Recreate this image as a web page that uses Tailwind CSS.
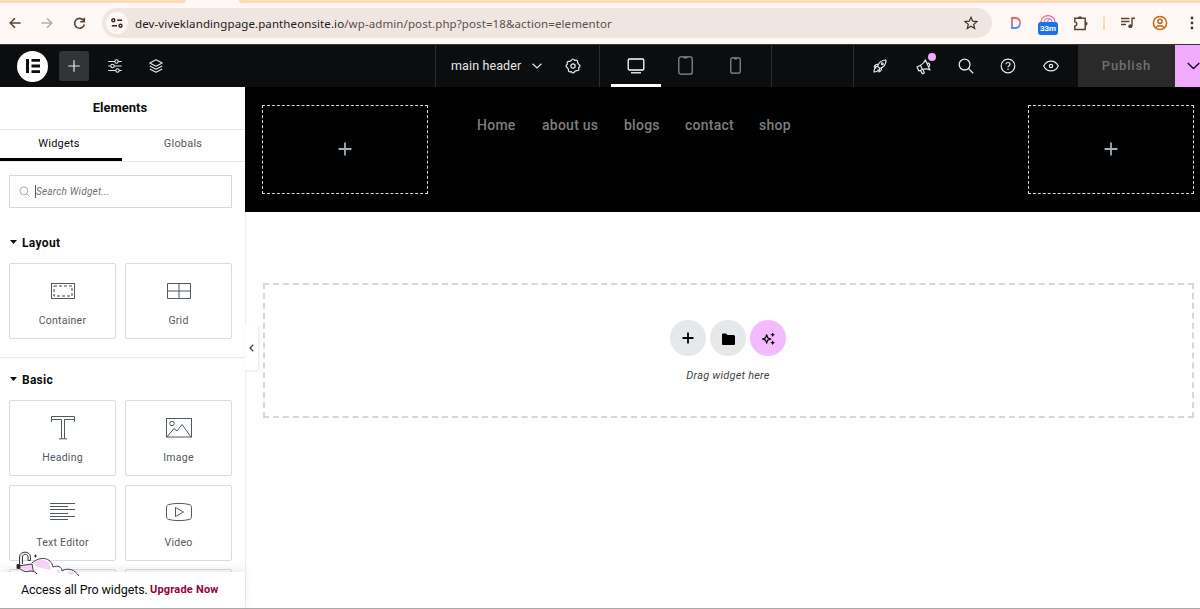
<!DOCTYPE html>
<html lang="en">
<head>
  <meta charset="UTF-8" />
  <meta name="viewport" content="width=device-width, initial-scale=1.0" />
  <title>Elementor | main header</title>
  <script src="https://cdn.jsdelivr.net/npm/@tailwindcss/browser@4"></script>
</head>
<body class="w-[1200px] h-[609px] overflow-hidden bg-white font-['Roboto',sans-serif] text-[#515962] flex flex-col">

  <!-- ---------- Browser toolbar ---------- -->
  <div class="h-[44px] shrink-0 bg-[#fff8f4] flex flex-col">
    <div class="h-[3px] flex justify-between">
      <div class="w-[186px] bg-[#ffdcb8] rounded-br-[4px]"></div>
      <div class="w-[961px] bg-[#ffdcb8] rounded-bl-[4px]"></div>
    </div>
    <div class="h-[40px] flex items-center text-[#5a4234]">
      <svg class="ml-[9px] size-3" viewBox="0 0 12 12" fill="none" stroke="currentColor" stroke-width="1.5"><path d="M11.5 6H1.5M6 1.2 1.2 6 6 10.8"/></svg>
      <svg class="ml-[20px] size-3 text-[#b9aca5]" viewBox="0 0 12 12" fill="none" stroke="currentColor" stroke-width="1.5"><path d="M.5 6h10M6 1.2 10.800 6 6 10.800"/></svg>
      <svg class="ml-[20px] size-[13px]" viewBox="0 0 13 13" fill="none" stroke="currentColor" stroke-width="1.6"><path d="M10.600 3.500A4.900 4.900 0 1 0 11.300 7.500M11.300 .8V4.800H7.300"/></svg>
      <div class="ml-[16px] w-[890px] h-[30px] rounded-full bg-[#efe6e2] flex items-center">
        <div class="ml-[4px] size-[22px] rounded-full bg-[#fff8f4] flex items-center justify-center">
          <svg class="w-3 h-[10px] text-[#33261f]" viewBox="0 0 12 10" fill="none" stroke="currentColor" stroke-width="1.4"><circle cx="2.300" cy="2.200" r="1.500"/><path d="M6.200 2.200H11M.8 7.800H6"/><circle cx="9.500" cy="7.800" r="1.500"/></svg>
        </div>
        <p class="ml-[7px] mt-[1px] font-['Noto_Sans',sans-serif] text-[11.5px] tracking-[0.1px] whitespace-nowrap text-[#5c504b]"><span class="text-[#221c19]">dev-viveklandingpage.pantheonsite.io</span>/wp-admin/post.php?post=18&amp;action=elementor</p>
        <svg class="ml-auto mr-[14px] size-[14px]" viewBox="0 0 14 14" fill="none" stroke="#3f3029" stroke-width="1.200"><path d="M7 1.300 8.700 5.200 12.900 5.600 9.700 8.400 10.700 12.500 7 10.300 3.300 12.500 4.300 8.400 1.100 5.600 5.300 5.200Z"/></svg>
      </div>
      <svg class="ml-[18px] w-[12px] h-[14px]" viewBox="0 0 12 14" fill="none"><defs><linearGradient id="dg" x1="0" y1="0" x2="0" y2="1"><stop offset="0" stop-color="#f3655a"/><stop offset=".5" stop-color="#c98bb0"/><stop offset="1" stop-color="#4b93ff"/></linearGradient></defs><path d="M2 2V12H5C8.500 12 10 10.200 10 7S8.500 2 5 2Z" stroke="url(#dg)" stroke-width="2"/></svg>
      <div class="ml-[16px] w-5 h-5 flex flex-col items-center mt-[4px]">
        <svg class="w-4 h-[7px] shrink-0" viewBox="0 0 16 7" fill="none" stroke-width="1.200"><path d="M1 7A7 6.300 0 0 1 15 7" stroke="#d765c8"/><path d="M1.200 6A7 6 0 0 1 7 .8" stroke="#f29b62"/><path d="M4 7A4 3.600 0 0 1 12 7M7 7 10 3.500" stroke="#d98bd0"/></svg>
        <span class="w-[20px] h-[13px] rounded-[3px] bg-[#1a73e8] text-white text-[8px] leading-[13px] font-bold text-center">33m</span>
      </div>
      <svg class="ml-[15px] w-[16px] h-[15px]" viewBox="0 0 16 15" fill="none" stroke="currentColor" stroke-width="1.500"><path d="M1.800 2.300H5.200M8.800 2.300H12.200V13.500H1.800V10C4.400 9.500 4.400 6.300 1.800 5.800V2.300H12.200"/><path d="M5 2.300a2 2 0 0 1 4 0ZM12.500 5.800a2 2 0 0 1 0 4Z" fill="currentColor" stroke="none"/></svg>
      <div class="ml-[14px] w-[2px] h-[14px] bg-[#ffdcb8]"></div>
      <svg class="ml-[16px] w-[14px] h-[12px]" viewBox="0 0 14 12" fill="none" stroke="currentColor" stroke-width="1.400"><path d="M0 1.500H8.500M0 4.500H8.500M0 7.500H5M11 9V1.300H14"/><circle cx="9.300" cy="9.200" r="2" fill="currentColor" stroke="none"/></svg>
      <svg class="ml-[17px] size-[16px] text-[#c06a1a]" viewBox="0 0 16 16" fill="none" stroke="currentColor" stroke-width="1.500"><circle cx="8" cy="8" r="6.600"/><circle cx="8" cy="6.300" r="2.100"/><path d="M3.700 12.600C5.500 10.200 10.500 10.200 12.300 12.600"/></svg>
      <svg class="ml-[22px] w-[4px] h-[14px] shrink-0" viewBox="0 0 4 14" fill="#4a372c"><circle cx="2" cy="2" r="1.400"/><circle cx="2" cy="7" r="1.400"/><circle cx="2" cy="12" r="1.400"/></svg>
    </div>
  </div>

  <!-- ---------- Editor top bar ---------- -->
  <header class="h-[43px] shrink-0 bg-[#0c0d0e] border-t border-[#3a3432] text-[#e6e8ea] flex">
    <div class="w-[435px] flex items-center">
      <div class="ml-[17px] size-[31px] rounded-full bg-white flex items-center justify-center">
        <svg class="w-[14px] h-[14px]" viewBox="0 0 14 14" fill="#0c0d0e"><path d="M0 0h3v14H0zM5.500 0H14v2.800H5.500zM5.500 5.600H14v2.800H5.500zM5.500 11.200H14V14H5.500z"/></svg>
      </div>
      <div class="ml-[11px] size-[30px] rounded-[3px] bg-[#333435] flex items-center justify-center">
        <svg class="size-[12px]" viewBox="0 0 12 12" stroke="currentColor" stroke-width="1.200"><path d="M6 .3V11.700M.3 6H11.700"/></svg>
      </div>
      <svg class="ml-[19px] w-[14px] h-[14px]" viewBox="0 0 14 14" fill="none" stroke="currentColor" stroke-width="1.100"><path d="M.3 2.500H6.700M10.300 2.500H13.700M.3 7H2.700M6.300 7H13.700M.3 11.500H7.700M11.300 11.500H13.700"/><circle cx="8.500" cy="2.500" r="1.700"/><circle cx="4.500" cy="7" r="1.700"/><circle cx="9.500" cy="11.500" r="1.700"/></svg>
      <svg class="ml-[27px] w-[14px] h-[14px]" viewBox="0 0 14 14" fill="none" stroke="currentColor" stroke-width="1.100" stroke-linejoin="round"><path d="M7 .8 13.200 4 7 7.200 .8 4ZM.8 7 7 10.200 13.200 7M.8 10 7 13.200 13.200 10"/></svg>
    </div>
    <div class="w-[165px] border-x border-[#2b2c2d] flex items-center">
      <span class="ml-[15px] w-[71px] text-[12.5px] tracking-[0.12px] whitespace-nowrap">main header</span>
      <svg class="ml-[10px] w-[10px] h-[6px]" viewBox="0 0 10 6" fill="none" stroke="currentColor" stroke-width="1.200"><path d="M.6 .8 5 5 9.400 .8"/></svg>
      <svg class="ml-[23px] size-[16px]" viewBox="0 0 16 16" fill="none" stroke="currentColor" stroke-width="1.200" stroke-linejoin="round"><path d="M6.300 2.400Q8 -.4 9.700 2.400 Q13 1.300 12.600 4.600L13.600 6.300Q16.400 8 13.600 9.700 14.700 13 11.400 12.600L9.700 13.600Q8 16.400 6.300 13.600 3 14.700 3.400 11.400L2.400 9.700Q-.4 8 2.400 6.300 1.300 3 4.600 3.400Z"/><circle cx="8" cy="8" r="2.200"/></svg>
    </div>
    <div class="w-[172px] border-r border-[#2b2c2d] flex">
      <div class="ml-[11px] w-[50px] border-b-[3px] border-white flex items-center justify-center text-white">
        <svg class="w-[18px] h-[16px] mt-[3px]" viewBox="0 0 18 16" fill="none" stroke="currentColor" stroke-width="1.300"><rect x="1.200" y="1" width="15.600" height="11" rx="1.200"/><path d="M4 14.800H14"/></svg>
      </div>
      <div class="w-[50px] pr-[2px] pb-[1px] flex items-center justify-center text-[#8f9193]">
        <svg class="w-[15px] h-[19px]" viewBox="0 0 15 19" fill="none" stroke="currentColor" stroke-width="1.200"><rect x=".8" y=".8" width="13.400" height="17.400" rx="2"/><path d="M5.500 1.800H9.500"/></svg>
      </div>
      <div class="w-[50px] pr-[2px] pb-[1px] flex items-center justify-center text-[#8f9193]">
        <svg class="w-[11px] h-[17px]" viewBox="0 0 11 17" fill="none" stroke="currentColor" stroke-width="1.200"><rect x=".8" y=".8" width="9.400" height="15.400" rx="1.500"/><path d="M4 1.800H7"/></svg>
      </div>
    </div>
    <div class="w-[82px] border-r border-[#2b2c2d]"></div>
    <div class="w-[224px] flex items-center">
      <svg class="ml-[19px] size-[14px]" viewBox="0 0 14 14" fill="none" stroke="currentColor" stroke-width="1.200" stroke-linejoin="round"><path d="M4.500 7.200C6 3 9 .9 13 1 13.100 5 11 8 6.800 9.500ZM5.200 5.600C3 5 1.500 6.400 1.200 8.200L4.500 7.200M8.400 8.800C9 11 7.600 12.500 5.800 12.800L6.800 9.500M3.500 8.700C1.500 9 1 10.500 1 13 3.500 13 5 12.500 5.300 10.500"/><circle cx="9.300" cy="4.700" r=".9"/></svg>
      <div class="relative ml-[29px] size-[17px]">
        <svg class="size-[17px]" viewBox="0 0 17 17" fill="none" stroke="currentColor" stroke-width="1.200" stroke-linejoin="round"><path d="M1 9 4.500 7.300 6.300 11.500 2.800 13ZM4.500 7.300C7 6 8.500 4.500 9.300 1.800L14 12C11.300 10.600 9 10.500 6.300 11.500M4.500 12.400 6.300 15.800 8.300 14.900 7 11.300M11.400 5.400C13.600 4.600 14.500 7.500 12.800 8.700"/></svg>
        <span class="absolute left-[12px] -top-[5px] size-[8px] rounded-full bg-[#f0abfc]"></span>
      </div>
      <svg class="ml-[25px] size-[16px]" viewBox="0 0 16 16" fill="none" stroke="currentColor" stroke-width="1.300"><circle cx="6.600" cy="6.600" r="5.400"/><path d="M10.600 10.600 15.200 15.200"/></svg>
      <svg class="ml-[26px] size-[16px]" viewBox="0 0 16 16" fill="none" stroke="currentColor" stroke-width="1.200"><circle cx="8" cy="8" r="6.800"/><path d="M5.900 6.300C6 3.900 10 3.900 10 6.300 10 7.700 8 7.600 8 9.200M8 10.600V12"/></svg>
      <svg class="ml-[27px] w-[16px] h-[12px]" viewBox="0 0 16 12" fill="none" stroke="currentColor" stroke-width="1.200"><path d="M.7 6C4 -.6 12 -.6 15.300 6 12 12.600 4 12.600 .7 6Z"/><circle cx="8" cy="6" r="1.700"/></svg>
    </div>
    <div class="w-[97px] bg-[#2a2a2b] text-[#707172] text-[13px] tracking-[0.85px] font-medium flex items-center justify-center">Publish</div>
    <div class="w-[25px] bg-[#f0abfc] overflow-hidden flex items-center">
      <svg class="ml-[12px] w-[13px] h-[8px] shrink-0" viewBox="0 0 13 8" fill="none" stroke="#0c0d0e" stroke-width="1.300"><path d="M.7 1 6.500 6.500 12.300 1"/></svg>
    </div>
  </header>

  <div class="h-[522px] flex">
    <!-- ---------- Widgets panel ---------- -->
    <aside class="relative w-[245px] shrink-0 bg-white">
      <h1 class="h-[42px] pr-[5px] flex items-center justify-center text-[13px] font-bold text-[#0c0d0e]">Elements</h1>
      <div class="h-[33px] border-y border-[#e6e8ea] flex text-[11px] tracking-[0.2px]">
        <div class="w-[122px] pr-[4px] pt-[1px] border-b-[3px] border-black text-[#0c0d0e] flex items-center justify-center">Widgets</div>
        <div class="w-[122px] pb-[2px] flex items-center justify-center">Globals</div>
      </div>
      <div class="mt-[13px] ml-[9px] w-[223px] h-[33px] border border-[#d5d8dc] flex items-center">
        <svg class="ml-[9px] size-[11px]" viewBox="0 0 12 12" fill="none" stroke="#9da5ae" stroke-width="1"><circle cx="5.300" cy="5.300" r="4.300"/><path d="M8.400 8.400 11.300 11.300"/></svg>
        <span class="ml-[5px] w-px h-[13px] bg-[#515962]"></span>
        <span class="text-[10px] tracking-[0.22px] italic text-[#6b7178]">Search Widget...</span>
      </div>

      <h2 class="mt-[25px] ml-[10px] h-[20px] flex items-center gap-[5px] text-[12px] font-bold tracking-[0.35px] text-[#0c0d0e]">
        <svg class="w-[7px] h-[4px] -mt-[2px]" viewBox="0 0 7 4" fill="currentColor"><path d="M0 0h7L3.500 4z"/></svg>Layout
      </h2>
      <div class="mt-[10px] ml-[9px] w-[223px] grid grid-cols-2 gap-[9px] text-[10.5px] tracking-[0.25px]">
        <div class="h-[76px] border border-[#d9dce0] rounded-[2px] flex flex-col items-center">
          <svg class="mt-[17px] w-[24px] h-[20px]" viewBox="0 0 24 20" fill="none" stroke="#515962"><rect x=".5" y="2.500" width="23" height="15"/><rect x="3" y="5" width="18" height="10" stroke="#3f444b" stroke-dasharray="3 2"/></svg>
          <span class="mt-[13px] leading-[13px]">Container</span>
        </div>
        <div class="h-[76px] border border-[#d9dce0] rounded-[2px] flex flex-col items-center">
          <svg class="mt-[17px] w-[24px] h-[20px]" viewBox="0 0 24 20" fill="none" stroke="#515962"><path d="M.5 2.500H23.500V17.500H.5ZM12 2.500V17.500M.5 10H23.500"/></svg>
          <span class="mt-[13px] leading-[13px]">Grid</span>
        </div>
      </div>

      <div class="mt-[18px] border-t border-[#e6e8ea]"></div>
      <h2 class="mt-[12px] ml-[10px] h-[20px] flex items-center gap-[5px] text-[12px] font-bold tracking-[0.25px] text-[#0c0d0e]">
        <svg class="w-[7px] h-[4px] -mt-[2px]" viewBox="0 0 7 4" fill="currentColor"><path d="M0 0h7L3.500 4z"/></svg>Basic
      </h2>
      <div class="mt-[10px] ml-[9px] w-[223px] h-[208px] overflow-hidden grid grid-cols-2 content-start gap-x-[9px] gap-y-[8.500px] text-[10.5px] tracking-[0.25px]">
        <div class="h-[76px] border border-[#d9dce0] rounded-[2px] flex flex-col items-center">
          <svg class="mt-[15px] w-[24px] h-[24px]" viewBox="0 0 24 24" fill="none" stroke="#515962"><path d="M.5 6V.5H23.500V6M.5 3.500H10.500V22.500M23.500 3.500H13.500V22.500M8 22.800H16"/></svg>
          <span class="mt-[11px] leading-[13px]">Heading</span>
        </div>
        <div class="h-[76px] border border-[#d9dce0] rounded-[2px] flex flex-col items-center">
          <svg class="mt-[16px] w-[26px] h-[22px]" viewBox="0 0 26 22" fill="none" stroke="#515962"><rect x=".5" y="1.500" width="25" height="18.500"/><circle cx="6" cy="6.500" r="2.200"/><path d="M.8 20 8 11.500 11 14 16 7.500 25 20"/></svg>
          <span class="mt-[12px] leading-[13px]">Image</span>
        </div>
        <div class="h-[76px] border border-[#d9dce0] rounded-[2px] flex flex-col items-center">
          <svg class="mt-[16px] w-[25px] h-[19px]" viewBox="0 0 25 19" fill="none" stroke="#515962"><path d="M0 1.500H25M0 4.500H18M0 7.500H25M0 11.500H18M0 14.500H25M0 17.500H18"/></svg>
          <span class="mt-[15px] leading-[13px]">Text Editor</span>
        </div>
        <div class="h-[76px] border border-[#d9dce0] rounded-[2px] flex flex-col items-center">
          <svg class="mt-[16px] w-[26px] h-[20px]" viewBox="0 0 26 20" fill="none" stroke="#515962"><path d="M3 2.500C8 1 18 1 23 2.500 25 3 25.500 4 25.500 6V14C25.500 16 25 17 23 17.500 18 19 8 19 3 17.500 1 17 .5 16 .5 14V6C.5 4 1 3 3 2.500Z"/><path d="M9.500 5.500V14.500L17.500 10Z"/></svg>
          <span class="mt-[14px] leading-[13px]">Video</span>
        </div>
        <div class="h-[76px] border border-[#d9dce0] rounded-[2px]"></div>
        <div class="h-[76px] border border-[#d9dce0] rounded-[2px]"></div>
      </div>

      <!-- upgrade notice, sits over the widget list -->
      <div class="absolute left-0 bottom-0 w-full h-[37px] bg-white border-b border-[#a9a9a9] shadow-[0_-3px_8px_rgba(0,0,0,0.08)] flex items-center pl-[21px] text-[#0c0d0e]">
        <span class="w-[129px] text-[12.5px] tracking-[-0.1px] whitespace-nowrap">Access all Pro widgets.</span>
        <span class="text-[11px] tracking-[0.2px] font-bold text-[#93003f] whitespace-nowrap">Upgrade Now</span>
        <svg class="absolute left-[16px] -top-[22px] w-[66px] h-[28px]" viewBox="0 0 66 28" fill="none" stroke="#3f3a42" stroke-width="1">
          <path d="M4 19 16 13C24 6 35 8 37 17 42 15 46 17 46 21 52 17 59 20 63 26H24Z" fill="#fff" stroke="none"/>
          <path d="M17 13C25 7 34 9 35 20L21 17ZM40 19 45 22 42 23ZM51 21 60 23 54 25ZM2 16 16 14 17 22 12 21 8 20Z" fill="#f6d3f5" stroke="none"/>
          <path d="M16 13C24 6 35 7 37 17 42 15 46 17 46 21 52 17 59 20 63 26M2 16 16 14 17.500 22M1 17C6 20 9 23 14 21 17 21 20 22 21 24"/>
          <path d="M3.500 14.500V7C3.500 .5 14.500 .5 14.500 7V10.500H12V7C12 3.500 6.500 3.500 6.500 7V14" fill="#eee"/>
          <path d="M1 14.500H4V18.500H1Z" fill="#222"/>
          <path d="M18 6H21M19.500 4.500V7.500"/>
        </svg>
      </div>

      <!-- collapse handle -->
      <div class="absolute left-[245px] top-[238px] z-10 w-[13px] h-[45px] bg-white rounded-r-[2px] shadow-[1px_1px_3px_rgba(0,0,0,0.10)] flex items-center justify-center">
        <svg class="w-[5px] h-[8px]" viewBox="0 0 5 8" fill="none" stroke="#3f444b" stroke-width="1.300"><path d="M4.300 .7 1 4 4.300 7.300"/></svg>
      </div>
    </aside>

    <!-- ---------- Canvas ---------- -->
    <main class="w-[955px] border-b border-[#a9a9a9] shadow-[inset_1px_0_1px_#eeeeee]">
      <div class="h-[125px] bg-black pt-[18px] pl-[17px] pr-[6px] flex">
        <div class="w-[166px] h-[89px] pb-[1px] border border-dashed border-[#d5d8dc] flex items-center justify-center text-[#a4afb9]">
          <svg class="size-[14px]" viewBox="0 0 14 14" stroke="currentColor" stroke-width="1.800"><path d="M7 .5V13.500M.5 7H13.500"/></svg>
        </div>
        <nav class="ml-[49px] mt-[10px] h-[20px] flex text-[14px] leading-[20px] font-medium tracking-[0.25px] text-[#7d7d7d] whitespace-nowrap">
          <a class="w-[65px]">Home</a>
          <a class="w-[82px]">about us</a>
          <a class="w-[61px]">blogs</a>
          <a class="w-[74px]">contact</a>
          <a>shop</a>
        </nav>
        <div class="ml-auto w-[166px] h-[89px] pb-[1px] border border-dashed border-[#d5d8dc] flex items-center justify-center text-[#a4afb9]">
          <svg class="size-[14px]" viewBox="0 0 14 14" stroke="currentColor" stroke-width="1.800"><path d="M7 .5V13.500M.5 7H13.500"/></svg>
        </div>
      </div>

      <div class="mt-[71px] ml-[18px] w-[931px] h-[135px] border-2 border-dashed border-[#d5d8dc] flex flex-col items-center">
        <div class="mt-[35px] mr-[1px] flex gap-[4px] text-black">
          <div class="size-[36px] rounded-full bg-[#e6e8ea] flex items-center justify-center">
            <svg class="size-[12px]" viewBox="0 0 12 12" stroke="currentColor" stroke-width="1.800"><path d="M6 .5V11.500M.5 6H11.500"/></svg>
          </div>
          <div class="size-[36px] rounded-full bg-[#e6e8ea] flex items-center justify-center">
            <svg class="w-[13px] h-[12px] mt-[1px]" viewBox="0 0 13 12" fill="currentColor"><path d="M0 1.500Q0 .5 1 .5H4L5.500 2H11.500Q13 2 13 3.500V11Q13 12 12 12H1Q0 12 0 11Z"/></svg>
          </div>
          <div class="size-[36px] rounded-full bg-[#f3bafd] flex items-center justify-center">
            <svg class="w-[13px] h-[13px]" viewBox="0 0 14 14" fill="none" stroke="currentColor" stroke-width="1.300" stroke-linejoin="round"><path d="M5 3 6.200 6.300 9.500 7.500 6.200 8.700 5 12 3.800 8.700 .5 7.500 3.800 6.300Z"/><path d="M11.500 .5 12.300 2.200 14 3 12.300 3.800 11.500 5.500 10.700 3.800 9 3 10.700 2.200ZM11.500 9 12.300 10.700 14 11.500 12.300 12.300 11.500 14 10.700 12.300 9 11.500 10.700 10.700Z" fill="currentColor" stroke="none"/></svg>
          </div>
        </div>
        <p class="mt-[12px] mr-[1px] text-[11px] leading-[16px] italic tracking-[0.2px] text-[#3f444b]">Drag widget here</p>
      </div>
    </main>
  </div>
</body>
</html>
